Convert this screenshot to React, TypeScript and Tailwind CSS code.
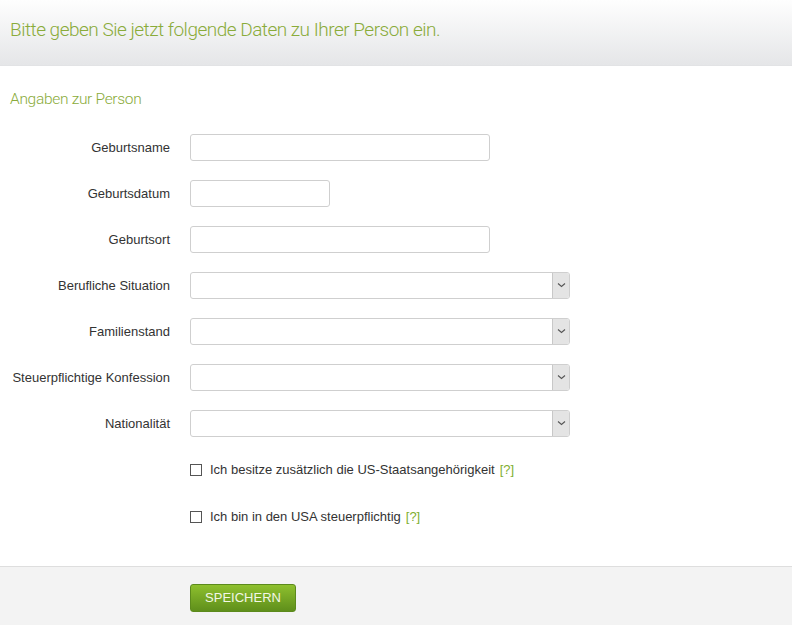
import React from 'react';

const labelCls = 'w-[170px] shrink-0 text-right text-[13px] text-[#333]';

const TextInput: React.FC<{ width: string }> = ({ width }) => (
  <div className={`${width} h-[27px] rounded-[3px] border border-[#cfcfcf] bg-white`} />
);

const SelectBox: React.FC = () => (
  <div className="flex h-[27px] w-[380px] rounded-[3px] border border-[#cfcfcf] bg-white">
    <div className="flex-1" />
    <div className="flex w-[17px] items-center justify-center rounded-r-[2px] border-l border-[#c8c8c8] bg-[#e4e4e4]">
      <svg width="9" height="6" viewBox="0 0 9 6">
        <path d="M1 1.5 L4.5 4.5 L8 1.5" fill="none" stroke="#555" strokeWidth="1.1" />
      </svg>
    </div>
  </div>
);

const Row: React.FC<{ label: string; children: React.ReactNode }> = ({ label, children }) => (
  <div className="flex h-[46px] items-center">
    <div className={labelCls}>{label}</div>
    <div className="ml-[20px]">{children}</div>
  </div>
);

const CheckRow: React.FC<{ text: string }> = ({ text }) => (
  <div className="flex h-[47px] items-center pl-[190px] text-[13px] text-[#333]">
    <div className="h-[12px] w-[12px] border border-[#555] bg-white" />
    <span className="ml-[8px]">{text}</span>
    <span className="ml-[5px] text-[#7fae2e]">[?]</span>
  </div>
);

export default function App() {
  return (
    <div className="flex h-[625px] w-[792px] flex-col bg-white font-['Liberation_Sans',Arial,sans-serif]">
      <div className="flex h-[66px] items-center border-b border-[#e2e3e5] bg-gradient-to-b from-[#fefefe] to-[#e5e6e8] pl-[10px] pb-[5px]">
        <h1 className="font-['Roboto',sans-serif] text-[19px] font-light tracking-[-0.5px] text-[#8aab3a]">
          Bitte geben Sie jetzt folgende Daten zu Ihrer Person ein.
        </h1>
      </div>

      <div className="pl-[10px] pt-[22px] font-['Roboto',sans-serif] text-[15.5px] font-light tracking-[-0.3px] text-[#8aab3a]">
        Angaben zur Person
      </div>

      <div className="mt-[13px] flex flex-col">
        <Row label="Geburtsname"><TextInput width="w-[300px]" /></Row>
        <Row label="Geburtsdatum"><TextInput width="w-[140px]" /></Row>
        <Row label="Geburtsort"><TextInput width="w-[300px]" /></Row>
        <Row label="Berufliche Situation"><SelectBox /></Row>
        <Row label="Familienstand"><SelectBox /></Row>
        <Row label="Steuerpflichtige Konfession"><SelectBox /></Row>
        <Row label="Nationalität"><SelectBox /></Row>
      </div>

      <div className="flex flex-col">
        <CheckRow text="Ich besitze zusätzlich die US-Staatsangehörigkeit" />
        <CheckRow text="Ich bin in den USA steuerpflichtig" />
      </div>

      <div className="mt-auto flex h-[59px] items-start border-t border-[#dedede] bg-[#f3f3f3] pl-[190px] pt-[17px]">
        <button className="h-[28px] w-[106px] rounded-[3px] border border-[#5c8a1c] bg-gradient-to-b from-[#8ec02e] to-[#5f8f1b] text-[13px] text-[#f2f7e6]">
          SPEICHERN
        </button>
      </div>
    </div>
  );
}
